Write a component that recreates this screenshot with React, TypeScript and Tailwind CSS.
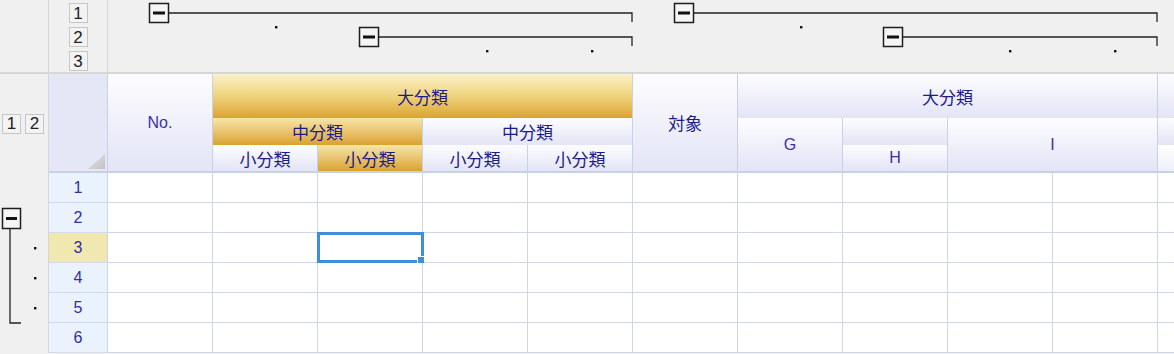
import type { ReactNode } from "react";

const cjk = "font-['Noto_Sans_CJK_JP',sans-serif] text-[17px] leading-none text-[#1c1c88]";
const latin = "font-['Liberation_Sans',sans-serif] text-[16px] leading-none text-[#3a30aa]";

const lavender = "bg-linear-to-b from-[#fdfdff] to-[#e3e4f6]";
const goldTop = "bg-linear-to-b from-[#fbf1c8] via-[#efd37c] to-[#dba32b]";
const goldSub = "bg-linear-to-b from-[#f7e6a6] to-[#d9a22c]";

function LevelButton({ n }: { n: number }) {
  return (
    <div className="flex h-[20px] w-[19px] items-center justify-center border border-[#c6c6c6] bg-[#f3f3f3] font-['Liberation_Sans',sans-serif] text-[17px] leading-none text-[#222]">
      {n}
    </div>
  );
}

function Box({ x, y, w = 19, h = 19 }: { x: number; y: number; w?: number; h?: number }) {
  return (
    <g>
      <rect x={x + 0.5} y={y + 0.5} width={w} height={h} fill="#f5f5f5" stroke="#1e1e1e" strokeWidth={1.5} />
      <rect x={x + 4} y={y + h / 2 - 1} width={w - 7} height={3} fill="#111" />
    </g>
  );
}

function Dot({ x, y }: { x: number; y: number }) {
  return <rect x={x - 1} y={y - 1} width={2.4} height={2.4} fill="#111" />;
}

// outline brackets above the column headers, drawn in page coordinates
function ColumnOutline() {
  return (
    <svg width={1066} height={72} viewBox="108 0 1066 72">
      <path d="M169 13H632V22" stroke="#222" strokeWidth={1.3} fill="none" />
      <Box x={149} y={3} />
      <Dot x={276} y={27} />
      <path d="M379 37H632V46" stroke="#222" strokeWidth={1.3} fill="none" />
      <Box x={359} y={27} />
      <Dot x={487} y={51} />
      <Dot x={592} y={51} />

      <path d="M694 13H1157V22" stroke="#222" strokeWidth={1.3} fill="none" />
      <Box x={674} y={3} />
      <Dot x={801} y={27} />
      <path d="M903 37H1157V46" stroke="#222" strokeWidth={1.3} fill="none" />
      <Box x={883} y={27} />
      <Dot x={1010} y={51} />
      <Dot x={1115} y={51} />
    </svg>
  );
}

function RowOutline() {
  return (
    <svg width={48} height={180} viewBox="0 173 48 180">
      <path d="M10 229V323H21" stroke="#222" strokeWidth={1.3} fill="none" />
      <Box x={2} y={208} w={18} h={20} />
      <Dot x={35} y={248} />
      <Dot x={35} y={278} />
      <Dot x={35} y={308} />
    </svg>
  );
}

function Head({ className, children }: { className: string; children?: ReactNode }) {
  return (
    <div className={`flex items-center justify-center border-r border-[#c6d1e6] ${className}`}>
      {children}
    </div>
  );
}

const rows = [1, 2, 3, 4, 5, 6];
const cols = Array.from({ length: 11 }, (_, i) => i);

export default function App() {
  return (
    <div className="h-[354px] w-[1174px] overflow-hidden bg-[#f0f0f0]">
      <div className="flex h-[74px] border-b-2 border-[#d6d6d6]">
        <div className="w-[49px] shrink-0 border-r border-[#d6d6d6]" />
        <div className="flex w-[59px] shrink-0 flex-col items-center gap-[4px] border-r border-[#d6d6d6] pt-[3px]">
          <LevelButton n={1} />
          <LevelButton n={2} />
          <LevelButton n={3} />
        </div>
        <div className="flex-1">
          <ColumnOutline />
        </div>
      </div>

      <div className="flex">
        <div className="flex w-[49px] shrink-0 flex-col border-r border-[#d6d6d6]">
          <div className="flex h-[99px] items-center gap-[4px] pl-[2px]">
            <LevelButton n={1} />
            <LevelButton n={2} />
          </div>
          <RowOutline />
        </div>

        <div className="grid flex-1 grid-cols-[59px_repeat(10,105px)_1fr] grid-rows-[44px_27px_28px_repeat(6,30px)] bg-white">
          {/* corner */}
          <div className="row-span-3 flex items-end justify-end border-r border-b-2 border-[#c6d1e6] bg-[#e5e7f7] pr-[2px] pb-[2px]">
            <div className="h-[15px] w-[17px] bg-linear-to-br from-[#e2e2e2] to-[#c2c2c2] [clip-path:polygon(100%_0,100%_100%,0_100%)]" />
          </div>

          <Head className={`row-span-3 border-b-2 ${lavender}`}>
            <span className={latin}>No.</span>
          </Head>
          <Head className={`col-span-4 ${goldTop}`}>
            <span className={cjk}>大分類</span>
          </Head>
          <Head className={`row-span-3 border-b-2 ${lavender}`}>
            <span className={cjk}>対象</span>
          </Head>
          <Head className={`col-span-4 ${lavender}`}>
            <span className={cjk}>大分類</span>
          </Head>
          <div className={lavender} />

          <Head className={`col-span-2 col-start-3 row-start-2 ${goldSub}`}>
            <span className={cjk}>中分類</span>
          </Head>
          <Head className={`col-span-2 col-start-5 row-start-2 ${lavender}`}>
            <span className={cjk}>中分類</span>
          </Head>
          <Head className={`col-start-8 row-span-2 row-start-2 border-b-2 ${lavender}`}>
            <span className={latin}>G</span>
          </Head>
          <Head className={`col-start-9 row-start-2 ${lavender}`} />
          <Head className={`col-span-2 col-start-10 row-span-2 row-start-2 border-b-2 ${lavender}`}>
            <span className={latin}>I</span>
          </Head>
          <div className={`col-start-12 row-start-2 ${lavender}`} />

          <Head className={`col-start-3 row-start-3 border-b-2 ${lavender}`}>
            <span className={cjk}>小分類</span>
          </Head>
          <Head className={`col-start-4 row-start-3 border-b-2 ${goldSub}`}>
            <span className={cjk}>小分類</span>
          </Head>
          <Head className={`col-start-5 row-start-3 border-b-2 ${lavender}`}>
            <span className={cjk}>小分類</span>
          </Head>
          <Head className={`col-start-6 row-start-3 border-b-2 ${lavender}`}>
            <span className={cjk}>小分類</span>
          </Head>
          <Head className={`col-start-9 row-start-3 border-b-2 ${lavender}`}>
            <span className={latin}>H</span>
          </Head>
          <div className={`col-start-12 row-start-3 border-b-2 border-[#c6d1e6] bg-linear-to-b from-[#ffffff] to-[#eeeff9]`} />

          {rows.map((r) => (
            <Row key={r} n={r} />
          ))}
        </div>
      </div>
    </div>
  );
}

function Row({ n }: { n: number }) {
  return (
    <>
      <div
        className={`flex items-center justify-center border-r border-b border-r-[#c9d6ea] border-b-[#d3dbe8] font-['Liberation_Sans',sans-serif] text-[16px] leading-none text-[#2f2fa0] ${
          n === 3 ? "bg-[#f0e8b0]" : "bg-[#eaf3fd]"
        }`}
      >
        {n}
      </div>
      {cols.map((c) =>
        n === 3 && c === 2 ? (
          <div key={c} className="relative border-r border-b border-[#cfd6e5]">
            <div className="absolute -top-[1px] -right-[2px] -bottom-[1px] -left-[1px] border-[3px] border-[#3d8fdb]" />
            <div className="absolute -right-[2px] -bottom-[1px] h-[7px] w-[7px] border-t border-l border-white bg-[#3d8fdb]" />
          </div>
        ) : (
          <div
            key={c}
            className={`border-b border-[#cfd6e5] ${c === 10 ? "" : "border-r"}`}
          />
        )
      )}
    </>
  );
}
